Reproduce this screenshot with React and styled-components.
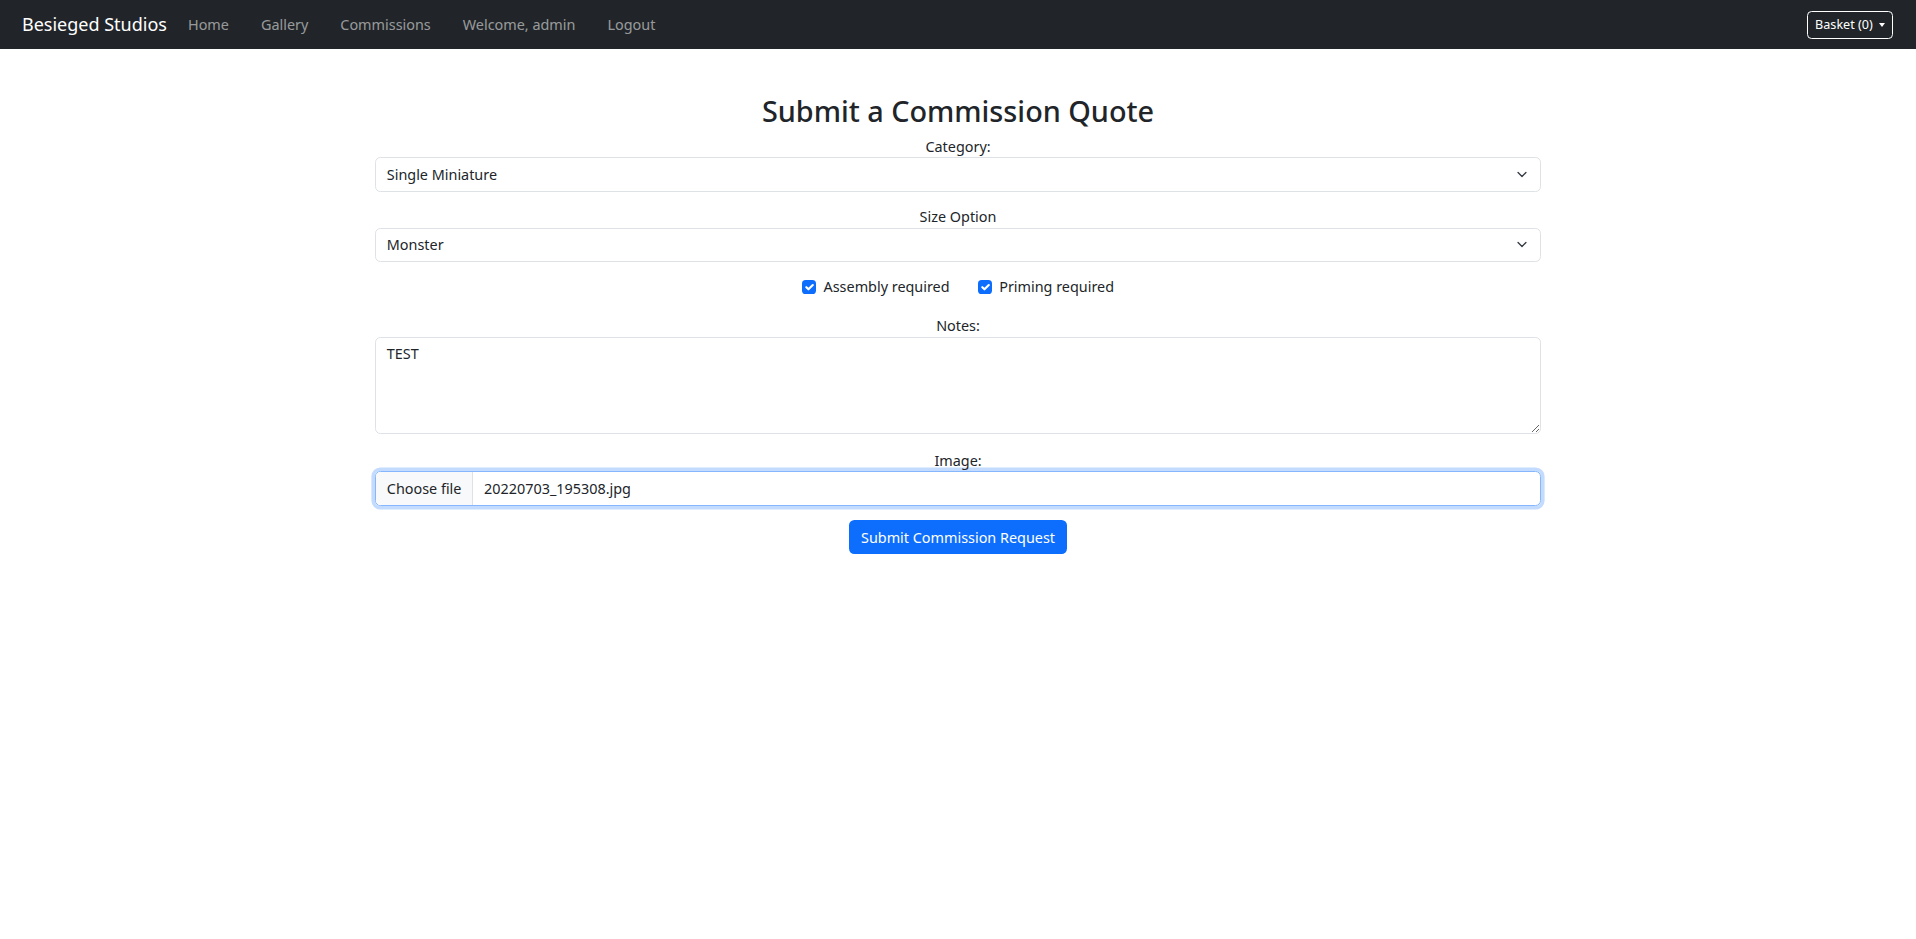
import styled, { createGlobalStyle } from "styled-components";

const GlobalStyle = createGlobalStyle`
  * {
    box-sizing: border-box;
  }

  body {
    margin: 0;
    background: #fff;
    color: #212529;
    font-family: "Noto Sans", "Open Sans", sans-serif;
    font-size: 14.4px;
    line-height: 1.5;
  }
`;

const Navbar = styled.nav`
  height: 49px;
  background-color: #212529;
  display: flex;
  align-items: center;
  padding: 0 23px 0 22px;
`;

const Brand = styled.a`
  color: #fff;
  font-size: 18px;
  text-decoration: none;
  margin-right: 5px;
  white-space: nowrap;
`;

const NavList = styled.div`
  display: flex;
  align-items: center;
`;

const NavLink = styled.a`
  color: rgba(255, 255, 255, 0.55);
  font-size: 14.4px;
  text-decoration: none;
  padding: 0 16px;
  white-space: nowrap;
`;

const BasketButton = styled.button`
  margin-left: auto;
  height: 28px;
  display: flex;
  align-items: center;
  gap: 6px;
  padding: 0 7.2px;
  background: transparent;
  color: #fff;
  border: 1px solid #fff;
  border-radius: 4.5px;
  font-family: inherit;
  font-size: 12.6px;

  &::after {
    content: "";
    border-top: 4px solid #fff;
    border-left: 3.6px solid transparent;
    border-right: 3.6px solid transparent;
  }
`;

const Main = styled.main`
  width: 1166px;
  margin: 0 auto;
  padding-top: 45px;
`;

const Title = styled.h2`
  margin: 0 0 7.2px;
  font-size: 28.8px;
  font-weight: 500;
  line-height: 1.2;
  text-align: center;
`;

const Group = styled.div`
  margin-bottom: ${(p) => p.$gap || 14.4}px;
`;

const Label = styled.label`
  display: block;
  text-align: center;
  font-size: 14.4px;
  line-height: 21.6px;
`;

const Select = styled.select`
  display: block;
  width: 100%;
  height: 34.2px;
  padding: 0 32.4px 0 10.8px;
  font-family: inherit;
  font-size: 14.4px;
  color: #212529;
  background-color: #fff;
  background-image: url("data:image/svg+xml,%3csvg xmlns='http://www.w3.org/2000/svg' viewBox='0 0 16 16'%3e%3cpath fill='none' stroke='%23343a40' stroke-linecap='round' stroke-linejoin='round' stroke-width='2' d='m2 5 6 6 6-6'/%3e%3c/svg%3e");
  background-repeat: no-repeat;
  background-position: right 10.8px center;
  background-size: 14.4px 10.8px;
  border: 1px solid #dee2e6;
  border-radius: 5.4px;
  appearance: none;
  outline: none;
`;

const CheckRow = styled.div`
  display: flex;
  justify-content: center;
  gap: 28px;
  height: 21.6px;
  margin-bottom: 17.5px;
`;

const CheckLabel = styled.label`
  display: flex;
  align-items: center;
  gap: 7.2px;
  font-size: 14.4px;
  line-height: 21.6px;
`;

const CheckBox = styled.span`
  width: 14.4px;
  height: 14.4px;
  border-radius: 3.6px;
  background-color: #0d6efd;
  display: flex;

  svg {
    width: 100%;
    height: 100%;
  }
`;

const TextArea = styled.textarea`
  display: block;
  width: 100%;
  height: 97px;
  padding: 5.4px 10.8px;
  font-family: inherit;
  font-size: 14.4px;
  line-height: 1.5;
  color: #212529;
  border: 1px solid #dee2e6;
  border-radius: 5.4px;
  resize: vertical;
  outline: none;
`;

const FileField = styled.label`
  display: flex;
  align-items: stretch;
  height: 34.2px;
  border: 1px solid #86b7fe;
  border-radius: 5.4px;
  box-shadow: 0 0 0 3.6px rgba(13, 110, 253, 0.25);
  overflow: hidden;
  font-size: 14.4px;
`;

const FileButton = styled.span`
  display: flex;
  align-items: center;
  padding: 0 10.8px;
  background-color: #f8f9fa;
  border-right: 1px solid #dee2e6;
  white-space: nowrap;
`;

const FileName = styled.span`
  display: flex;
  align-items: center;
  padding: 0 10.8px;
`;

const ButtonRow = styled.div`
  display: flex;
  justify-content: center;
  margin-top: 14.4px;
`;

const SubmitButton = styled.button`
  height: 34.2px;
  padding: 0 12px;
  background-color: #0d6efd;
  color: #fff;
  border: none;
  border-radius: 5.4px;
  font-family: inherit;
  font-size: 14.4px;
`;

const Check = () => (
  <svg viewBox="0 0 20 20">
    <path
      fill="none"
      stroke="#fff"
      strokeLinecap="round"
      strokeLinejoin="round"
      strokeWidth="3"
      d="m6 10 3 3 6-6"
    />
  </svg>
);

function App() {
  return (
    <>
      <GlobalStyle />
      <Navbar>
        <Brand href="#">Besieged Studios</Brand>
        <NavList>
          <NavLink href="#">Home</NavLink>
          <NavLink href="#">Gallery</NavLink>
          <NavLink href="#">Commissions</NavLink>
          <NavLink href="#">Welcome, admin</NavLink>
          <NavLink href="#">Logout</NavLink>
        </NavList>
        <BasketButton>Basket (0)</BasketButton>
      </Navbar>

      <Main>
        <Title>Submit a Commission Quote</Title>

        <Group>
          <Label htmlFor="category">Category:</Label>
          <Select id="category" defaultValue="single">
            <option value="single">Single Miniature</option>
          </Select>
        </Group>

        <Group>
          <Label htmlFor="size">Size Option</Label>
          <Select id="size" defaultValue="monster">
            <option value="monster">Monster</option>
          </Select>
        </Group>

        <CheckRow>
          <CheckLabel>
            <CheckBox>
              <Check />
            </CheckBox>
            Assembly required
          </CheckLabel>
          <CheckLabel>
            <CheckBox>
              <Check />
            </CheckBox>
            Priming required
          </CheckLabel>
        </CheckRow>

        <Group $gap={16}>
          <Label htmlFor="notes">Notes:</Label>
          <TextArea id="notes" defaultValue="TEST" />
        </Group>

        <Label>Image:</Label>
        <FileField>
          <FileButton>Choose file</FileButton>
          <FileName>20220703_195308.jpg</FileName>
        </FileField>

        <ButtonRow>
          <SubmitButton>Submit Commission Request</SubmitButton>
        </ButtonRow>
      </Main>
    </>
  );
}

export default App;
